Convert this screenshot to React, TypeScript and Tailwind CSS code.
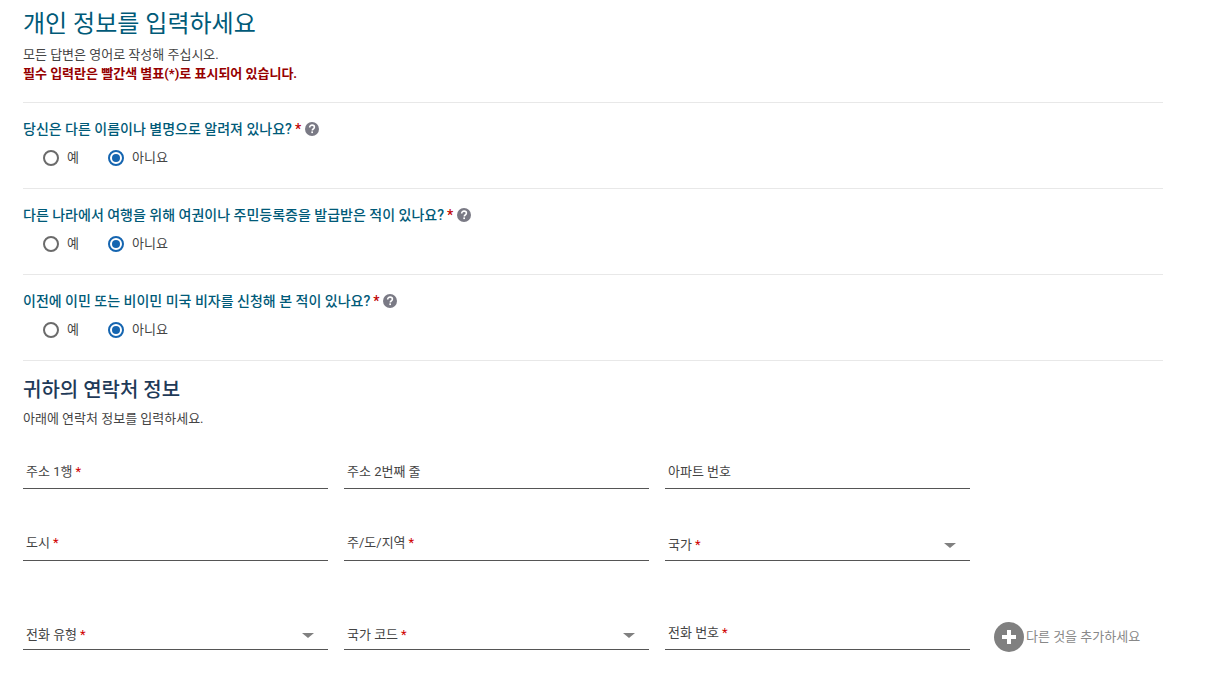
import React from "react";

const questions = [
  "당신은 다른 이름이나 별명으로 알려져 있나요?",
  "다른 나라에서 여행을 위해 여권이나 주민등록증을 발급받은 적이 있나요?",
  "이전에 이민 또는 비이민 미국 비자를 신청해 본 적이 있나요?",
];

const HelpIcon = () => (
  <svg width="14" height="14" viewBox="0 0 14 14" className="ml-[4px]">
    <circle cx="7" cy="7" r="7" fill="#7a7a85" />
    <path d="M4.7 5.4c0-1.4 1-2.3 2.4-2.3s2.3.8 2.3 2c0 1-.6 1.5-1.2 1.9-.5.3-.8.6-.8 1.1v.3" fill="none" stroke="#fff" strokeWidth="1.6" />
    <rect x="6.3" y="9.4" width="1.7" height="1.7" fill="#fff" />
  </svg>
);

const Radio = ({ label, checked }: { label: string; checked?: boolean }) => (
  <div className="flex items-center">
    <span
      className={`flex h-4 w-4 items-center justify-center rounded-full border-2 ${
        checked ? "border-[#1565b0]" : "border-[#6b6b6b]"
      }`}
    >
      {checked && <span className="h-2 w-2 rounded-full bg-[#1565b0]" />}
    </span>
    <span className="ml-[8px] text-[13px] text-[#444]">{label}</span>
  </div>
);

const Question = ({ text }: { text: string }) => (
  <div className="h-[86px] border-t border-[#e8e8e8] pt-[16px]">
    <div className="flex h-[20px] items-center text-[14px] font-medium text-[#005a78]">
      <span>{text}</span>
      <span className="ml-[3px] text-[#c00000]">*</span>
      <HelpIcon />
    </div>
    <div className="ml-[20px] mt-[9px] flex h-[20px] items-center gap-[29px]">
      <Radio label="예" />
      <Radio label="아니요" checked />
    </div>
  </div>
);

const Field = ({
  label,
  required,
  select,
  bottom,
}: {
  label: string;
  required?: boolean;
  select?: boolean;
  bottom: string;
}) => (
  <div className={`flex h-[34px] items-end justify-between border-b border-[#555] ${bottom}`}>
    <span className="pl-[3px] text-[13px] leading-[18px] text-[#444]">
      {label}
      {required && <span className="ml-[3px] text-[#d00000]">*</span>}
    </span>
    {select && (
      <span className="mb-[6px] mr-[14px] h-0 w-0 border-x-[6px] border-t-[5px] border-x-transparent border-t-[#808080]" />
    )}
  </div>
);

export default function App() {
  return (
    <div
      className="h-[679px] w-[1215px] overflow-hidden bg-white pl-[23px]"
      style={{ fontFamily: 'Roboto, "Noto Sans CJK KR", sans-serif' }}
    >
      <div className="w-[1140px]">
        <h1 className="pt-[8px] text-[24px] leading-[32px] text-[#005a78]">개인 정보를 입력하세요</h1>
        <p className="mt-[6px] text-[13px] leading-[18px] text-[#444]">모든 답변은 영어로 작성해 주십시오.</p>
        <p className="text-[13px] font-bold leading-[19px] text-[#960000]">
          필수 입력란은 빨간색 별표(*)로 표시되어 있습니다.
        </p>
        <div className="mt-[19px]">
          {questions.map((q) => (
            <Question key={q} text={q} />
          ))}
        </div>
        <div className="border-t border-[#e8e8e8] pt-[15px]">
          <h2 className="text-[20px] font-medium leading-[28px] text-[#1f3a58]">귀하의 연락처 정보</h2>
          <p className="mt-[5px] text-[13px] leading-[19px] text-[#444]">아래에 연락처 정보를 입력하세요.</p>
        </div>
        <div className="mt-[27px] grid grid-cols-[305px_305px_305px_1fr] gap-x-4">
          <Field label="주소 1행" required bottom="pb-[7px]" />
          <Field label="주소 2번째 줄" bottom="pb-[7px]" />
          <Field label="아파트 번호" bottom="pb-[7px]" />
          <div />
          <div className="col-span-4 h-[38px]" />
          <Field label="도시" required bottom="pb-[8px]" />
          <Field label="주/도/지역" required bottom="pb-[8px]" />
          <Field label="국가" required select bottom="pb-[6px]" />
          <div />
          <div className="col-span-4 h-[55px]" />
          <Field label="전화 유형" required select bottom="pb-[5px]" />
          <Field label="국가 코드" required select bottom="pb-[5px]" />
          <Field label="전화 번호" required bottom="pb-[7px]" />
          <div className="ml-[8px] flex translate-y-[4px] items-center">
            <span className="flex h-[30px] w-[30px] shrink-0 items-center justify-center rounded-full bg-[#808080]">
              <svg width="16" height="16" viewBox="0 0 16 16">
                <path d="M8 1v14M1 8h14" stroke="#fff" strokeWidth="4" />
              </svg>
            </span>
            <span className="ml-[2px] text-[13px] text-[#888]">다른 것을 추가하세요</span>
          </div>
        </div>
      </div>
    </div>
  );
}
